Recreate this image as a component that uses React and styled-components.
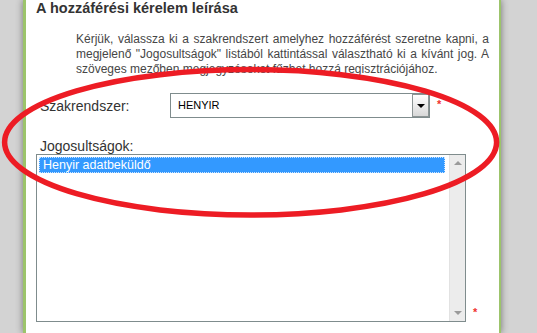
import React from "react";
import styled, { createGlobalStyle } from "styled-components";

const Global = createGlobalStyle`
  html, body { margin: 0; padding: 0; }
  body {
    background: #d3d3d3;
    font-family: "Liberation Sans", Arial, sans-serif;
    overflow: hidden;
  }
`;

const Page = styled.div`
  position: relative;
  width: 537px;
  height: 333px;
  padding-left: 23px;
  box-sizing: border-box;
  overflow: hidden;
`;

const Panel = styled.div`
  width: 478px;
  min-height: 333px;
  box-sizing: border-box;
  background: #fff;
  border-left: 3px solid #9cc46b;
  border-right: 2px solid #9cc46b;
  box-shadow: 0 0 7px rgba(0, 0, 0, 0.45);
  padding: 0 10px 0 10px;
`;

const Title = styled.h2`
  margin: 0;
  font-size: 14.5px;
  line-height: 16px;
  font-weight: bold;
  color: #333;
`;

const Intro = styled.p`
  margin: 16px 0 0 40px;
  font-size: 12px;
  line-height: 15px;
  color: #464646;
  text-align: justify;
`;

const FieldRow = styled.div`
  display: flex;
  align-items: center;
  margin-top: 16px;
`;

const Label = styled.label`
  display: block;
  font-size: 14px;
  line-height: 16px;
  color: #333;
  padding-left: 4px;
  width: ${(p) => (p.$inline ? "130px" : "auto")};
  margin-top: ${(p) => p.$top || 0}px;
`;

const Select = styled.div`
  display: flex;
  width: 260px;
  height: 25px;
  box-sizing: border-box;
  border: 1px solid #7f8c8d;
  background: #fff;
`;

const SelectValue = styled.div`
  flex: 1;
  padding-left: 7px;
  font-size: 11px;
  line-height: 23px;
  color: #000;
`;

const SelectButton = styled.div`
  width: 17px;
  box-sizing: border-box;
  border: 1px solid #8c9494;
  background: linear-gradient(#ffffff, #d8d8d8);
  display: flex;
  align-items: center;
  justify-content: center;
`;

const Arrow = styled.span`
  width: 0;
  height: 0;
  border-left: 4px solid transparent;
  border-right: 4px solid transparent;
  border-${(p) => (p.$up ? "bottom" : "top")}: 4px solid ${(p) => p.$color || "#000"};
`;

const Required = styled.span`
  color: #f0322d;
  font-size: 11px;
  font-weight: bold;
  line-height: 11px;
  margin-left: 7px;
  align-self: ${(p) => (p.$bottom ? "flex-end" : "flex-start")};
  margin-top: ${(p) => (p.$bottom ? 0 : 6)}px;
  margin-bottom: ${(p) => (p.$bottom ? 4 : 0)}px;
`;

const ListRow = styled.div`
  display: flex;
  align-items: flex-end;
`;

const ListBox = styled.div`
  display: flex;
  width: 430px;
  height: 168px;
  box-sizing: border-box;
  border: 1px solid #7f8c8d;
  background: #fff;
`;

const Options = styled.div`
  flex: 1;
  padding: 2px 4px 2px 2px;
`;

const Option = styled.div`
  height: 16px;
  line-height: 16px;
  padding-left: 4px;
  font-size: 12.5px;
  color: #fff;
  background: ${(p) => (p.$selected ? "#3399ff" : "transparent")};
  outline: 1px dotted rgba(255, 255, 255, 0.75);
  outline-offset: -1px;
  white-space: nowrap;
`;

const Scrollbar = styled.div`
  width: 16px;
  background: #ececec;
  border-left: 1px solid #e2e2e2;
  box-sizing: border-box;
  display: flex;
  flex-direction: column;
  justify-content: space-between;
  align-items: center;
  padding: 6px 0 6px;
`;

const Overlay = styled.svg`
  position: absolute;
  left: 0;
  top: 0;
  pointer-events: none;
`;

export default function App() {
  return (
    <Page>
      <Global />
      <Panel>
        <Title>A hozzáférési kérelem leírása</Title>
        <Intro>
          Kérjük, válassza ki a szakrendszert amelyhez hozzáférést szeretne kapni, a
          megjelenő "Jogosultságok" listából kattintással választható ki a kívánt jog. A
          szöveges mezőben megjegyzéseket fűzhet hozzá regisztrációjához.
        </Intro>
        <FieldRow>
          <Label $inline>Szakrendszer:</Label>
          <Select>
            <SelectValue>HENYIR</SelectValue>
            <SelectButton>
              <Arrow />
            </SelectButton>
          </Select>
          <Required>*</Required>
        </FieldRow>
        <Label $top={20}>Jogosultságok:</Label>
        <ListRow>
          <ListBox>
            <Options>
              <Option $selected>Henyir adatbeküldő</Option>
            </Options>
            <Scrollbar>
              <Arrow $up $color="#9a9a9a" />
              <Arrow $color="#9a9a9a" />
            </Scrollbar>
          </ListBox>
          <Required $bottom>*</Required>
        </ListRow>
      </Panel>
      <Overlay width="537" height="333" viewBox="0 0 537 333">
        <ellipse
          cx="250.6"
          cy="142.3"
          rx="246"
          ry="72.7"
          fill="none"
          stroke="#ed1c24"
          strokeWidth="5.5"
        />
      </Overlay>
    </Page>
  );
}
